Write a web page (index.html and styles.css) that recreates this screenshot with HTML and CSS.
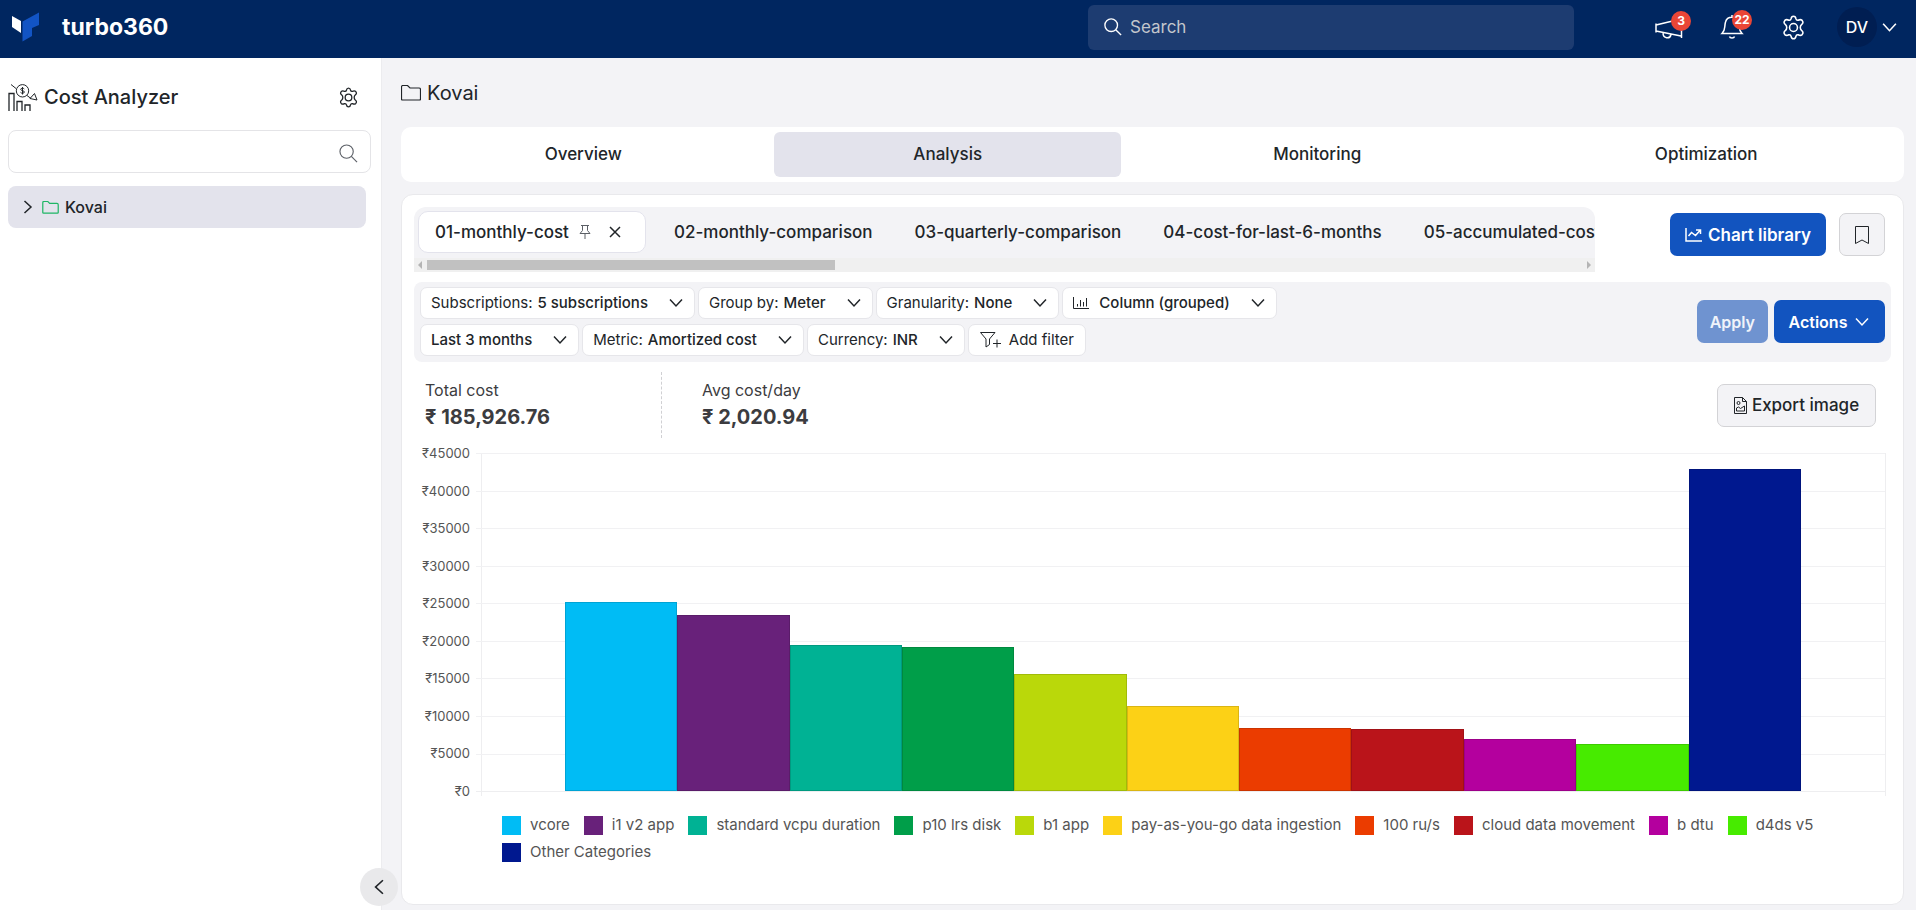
FILE: index.html
```html
<!DOCTYPE html>
<html lang="en">
<head>
<meta charset="utf-8">
<title>Cost Analyzer - turbo360</title>
<link rel="stylesheet" href="styles.css">
</head>
<body>
<svg class="defs" aria-hidden="true">
  <symbol id="chevron" viewBox="0 0 16 16"><path d="M2 4.500l6 6.500 6-6.500"/></symbol>
  <symbol id="magnifier" viewBox="0 0 20 20"><circle cx="8" cy="8" r="7"/><path d="M13 13l6 6"/></symbol>
  <symbol id="folder" viewBox="0 0 20 16"><path d="M.5 14V2q0-1.500 1.500-1.500h4.500l2.500 2.500h9q1.500 0 1.500 1.500V14q0 1-1 1h-17q-1 0-1-1z"/></symbol>
  <symbol id="gear" viewBox="0 0 24 24"><path d="M9.700 3.500Q10 1.200 12 1.200t2.300 2.300q.4 1.800 2.200 1.500 2.300-1.300 3.800.2 1.800 2.300-.6 4-1.200 1-1.200 2.800t1.200 2.800q2.400 1.700.6 4-1.500 1.500-3.800.2-1.800-.3-2.200 1.500-.3 2.300-2.300 2.300t-2.300-2.300Q9.300 18.700 7.500 19q-2.300 1.300-3.800-.2-1.800-2.300.6-4 1.200-1 1.200-2.800T4.300 9.200q-2.400-1.700-.6-4Q5.200 3.700 7.500 5q1.800.3 2.200-1.500z"/><circle cx="12" cy="12" r="3.800"/></symbol>
</svg>

<header class="topbar">
  <a class="brand" href="#">
    <svg class="brand-mark" viewBox="0 0 27 30"><path fill="#fff" d="M0 4l9 5v12l-9-6z"/><path fill="#1254c4" d="M10.500 9.500L27 .5V13l-7 3v8l-9.500 5.500z"/></svg>
    <span>turbo360</span>
  </a>
  <label class="global-search">
    <svg class="icon" width="18" height="18"><use href="#magnifier"/></svg>
    <input type="search" placeholder="Search" aria-label="Search">
  </label>
  <nav class="top-actions" aria-label="Account">
    <button class="top-button" aria-label="Announcements"><svg class="icon" width="28" height="24" viewBox="0 0 28 24"><path d="M1 8.500v9M1 10l25-6M1 16l25 5M26.500 2v21M8 18c0 5.500 7 6.500 8 1.500"/></svg><span class="badge">3</span></button>
    <button class="top-button" aria-label="Notifications"><svg class="icon" width="24" height="26" viewBox="0 0 24 26"><path d="M2 19.500c4-4 2-6 3.500-11.500C7 1.500 17 1.500 18.500 8c1.500 5.500-.5 7.500 3.500 11.500zM9.500 22.500c.5 2 4.500 2 5 0M12 1v2.500"/></svg><span class="badge">22</span></button>
    <button class="top-button" aria-label="Settings"><svg class="icon" width="25" height="25"><use href="#gear"/></svg></button>
    <button class="profile"><span class="avatar">DV</span><svg class="icon" width="17" height="17"><use href="#chevron"/></svg></button>
  </nav>
</header>

<div class="shell">
  <aside class="sidebar">
    <div class="side-head">
      <svg class="icon" width="30" height="27" viewBox="0 0 30 27"><path stroke-width="1.300" d="M1 27V9.500h5V27M9 27v-9.500h5V27M17 27v-6h5v6"/><circle stroke-width="1" cx="14.500" cy="6.800" r="6.200"/><path stroke-width="1" d="M3 .5l5 4M19 11.500l4 3M22 14.500l4.500-5 2.500 6.500zM16.300 5c-.8-1.200-3.600-1-3.600.4 0 1.500 3.700 1 3.700 2.600 0 1.500-3 1.700-3.900.3M14.500 3v7.500"/></svg>
      <h1>Cost Analyzer</h1>
      <button class="plain" aria-label="Cost Analyzer settings"><svg class="icon" width="21" height="21"><use href="#gear"/></svg></button>
    </div>
    <label class="side-search">
      <input type="search" aria-label="Filter groups">
      <svg class="icon" width="19" height="19"><use href="#magnifier"/></svg>
    </label>
    <a class="tree-row" href="#">
      <svg class="icon turn-right" width="16" height="16"><use href="#chevron"/></svg>
      <svg class="icon green" width="17" height="13"><use href="#folder"/></svg>
      <span>Kovai</span>
    </a>
    <button class="collapse" aria-label="Collapse sidebar"><svg class="icon turn-left" width="18" height="18"><use href="#chevron"/></svg></button>
  </aside>

  <main class="main">
    <div class="crumb"><svg class="icon" width="20" height="16"><use href="#folder"/></svg><span>Kovai</span></div>
    <nav class="tabs" aria-label="Sections">
      <a href="#">Overview</a><a class="active" href="#">Analysis</a><a href="#">Monitoring</a><a href="#">Optimization</a>
    </nav>

    <section class="card">
      <div class="views">
        <div class="strip">
          <div class="view-list">
            <div class="view active"><span>01-monthly-cost</span>
              <button class="plain pin" aria-label="Pin"><svg class="icon thin" width="12" height="16" viewBox="0 0 12 16"><path d="M2 1.500h8M3.500 1.500v5L1 9.500h10L8.500 6.500v-5M6 9.500V15"/></svg></button>
              <button class="plain" aria-label="Close"><svg class="icon" width="12" height="12" viewBox="0 0 12 12"><path d="M1 1l10 10M11 1L1 11"/></svg></button>
            </div>
            <a class="view" href="#">02-monthly-comparison</a>
            <a class="view" href="#">03-quarterly-comparison</a>
            <a class="view" href="#">04-cost-for-last-6-months</a>
            <a class="view" href="#">05-accumulated-cost</a>
          </div>
          <div class="scroller"><i class="arrow left"></i><div class="track"><div class="thumb"></div></div><i class="arrow right"></i></div>
        </div>
        <button class="btn primary library"><svg class="icon" width="18" height="14" viewBox="0 0 18 14"><path d="M1 0v13h16M3.500 8l3-3.500 4 3 4.500-5M11 2h4.500v4"/></svg>Chart library</button>
        <button class="btn outline bookmark" aria-label="Bookmark"><svg class="icon thin" width="16" height="20" viewBox="0 0 16 20"><path d="M1.500 1.500h13v17L8 15l-6.500 3.500z"/></svg></button>
      </div>

      <div class="filters">
        <div class="chip-rows">
          <div class="chips">
            <button class="chip">Subscriptions: <b>5 subscriptions</b><svg class="icon" width="16" height="16"><use href="#chevron"/></svg></button>
            <button class="chip">Group by: <b>Meter</b><svg class="icon" width="16" height="16"><use href="#chevron"/></svg></button>
            <button class="chip">Granularity: <b>None</b><svg class="icon" width="16" height="16"><use href="#chevron"/></svg></button>
            <button class="chip"><svg class="icon thin lead" width="16" height="12" viewBox="0 0 16 12"><path d="M.5 0v11.500H16M4.500 9.500V7M7.500 9.500V3M10.500 9.500V5M13.500 9.500V1"/></svg><b>Column (grouped)</b><svg class="icon" width="16" height="16"><use href="#chevron"/></svg></button>
          </div>
          <div class="chips">
            <button class="chip"><b>Last 3 months</b><svg class="icon" width="16" height="16"><use href="#chevron"/></svg></button>
            <button class="chip">Metric: <b>Amortized cost</b><svg class="icon" width="16" height="16"><use href="#chevron"/></svg></button>
            <button class="chip">Currency: <b>INR</b><svg class="icon" width="16" height="16"><use href="#chevron"/></svg></button>
            <button class="chip add"><svg class="icon thin" width="21" height="16" viewBox="0 0 21 16"><path d="M.5.500h14.500L9.500 7v5.500L6 15V7zM13 11.500h8M17 7.500v8"/></svg>Add filter</button>
          </div>
        </div>
        <button class="btn primary" disabled>Apply</button>
        <button class="btn primary actions">Actions<svg class="icon" width="16" height="16"><use href="#chevron"/></svg></button>
      </div>

      <div class="summary">
        <div class="figure"><span>Total cost</span><strong>₹ 185,926.76</strong></div>
        <div class="figure"><span>Avg cost/day</span><strong>₹ 2,020.94</strong></div>
        <button class="btn outline export"><svg class="icon thin" width="13" height="17" viewBox="0 0 13 17"><path d="M.5.500h8l4 4v12H.5zM8.500.5v4h4M2.500 14v-3l2-1 2 1.500 4-2.500v5z"/><circle cx="4.500" cy="6" r="1.500"/></svg>Export image</button>
      </div>

      <div class="chart">
        <div class="axis"><span>₹45000</span><span>₹40000</span><span>₹35000</span><span>₹30000</span><span>₹25000</span><span>₹20000</span><span>₹15000</span><span>₹10000</span><span>₹5000</span><span>₹0</span></div>
        <div class="plot">
          <div class="lines"><i></i><i></i><i></i><i></i><i></i><i></i><i></i><i></i><i></i></div>
          <div class="bars">
            <div class="bar c1" style="height:55.800%"></div>
            <div class="bar c2" style="height:52.100%"></div>
            <div class="bar c3" style="height:43.100%"></div>
            <div class="bar c4" style="height:42.700%"></div>
            <div class="bar c5" style="height:34.500%"></div>
            <div class="bar c6" style="height:25.300%"></div>
            <div class="bar c7" style="height:18.600%"></div>
            <div class="bar c8" style="height:18.200%"></div>
            <div class="bar c9" style="height:15.300%"></div>
            <div class="bar c10" style="height:13.800%"></div>
            <div class="bar c11" style="height:95.300%"></div>
          </div>
        </div>
      </div>
      <ul class="legend">
        <li><i class="c1"></i>vcore</li><li><i class="c2"></i>i1 v2 app</li><li><i class="c3"></i>standard vcpu duration</li><li><i class="c4"></i>p10 lrs disk</li><li><i class="c5"></i>b1 app</li><li><i class="c6"></i>pay-as-you-go data ingestion</li><li><i class="c7"></i>100 ru/s</li><li><i class="c8"></i>cloud data movement</li><li><i class="c9"></i>b dtu</li><li><i class="c10"></i>d4ds v5</li><li><i class="c11"></i>Other Categories</li>
      </ul>
    </section>
  </main>
</div>
</body>
</html>
```
FILE: styles.css
```css
* { box-sizing: border-box; }
body {
  margin: 0;
  min-height: 100vh;
  display: flex;
  flex-direction: column;
  background: #f3f3f6;
  color: #212529;
  font: 500 16px/24px Inter, "Open Sans", "Noto Sans", sans-serif;
}
button, input { font: inherit; color: inherit; }
button { border: 0; padding: 0; background: none; cursor: pointer; }
a { color: inherit; text-decoration: none; }
.defs { position: absolute; width: 0; height: 0; }
.icon { flex: none; fill: none; stroke: currentColor; stroke-width: 1.5; }
.thin { stroke-width: 1; }
.turn-right { transform: rotate(-90deg); }
.turn-left { transform: rotate(90deg); }
.green { color: #1fb665; }
.plain { display: flex; }

/* Top bar */
.topbar {
  height: 58px;
  padding: 0 18px 0 12px;
  display: flex;
  align-items: center;
  background: #002660;
  color: #fff;
}
.brand { flex: 1; display: flex; align-items: center; gap: 23px; padding-bottom: 4px; font-size: 23px; font-weight: 700; }
.brand-mark { width: 27px; height: 30px; }
.global-search {
  width: 486px;
  height: 45px;
  margin-bottom: 4px;
  padding: 0 16px;
  display: flex;
  align-items: center;
  gap: 6px;
  border-radius: 6px;
  background: #1d3c71;
}
.global-search input { flex: 1; min-width: 0; border: 0; background: none; outline: 0; font-size: 17px; font-weight: 400; }
.global-search input::placeholder { color: #c3c6cc; }
.top-actions { width: 324px; display: flex; align-items: center; justify-content: flex-end; gap: 37px; padding-bottom: 4px; }
.top-button { position: relative; display: flex; }
.badge {
  position: absolute;
  top: -4px;
  right: -8px;
  min-width: 20px;
  height: 20px;
  border-radius: 10px;
  background: #ea4636;
  font-size: 12px;
  font-weight: 700;
  line-height: 20px;
  text-align: center;
}
.profile { display: flex; align-items: center; gap: 4px; margin-left: -6px; }
.avatar { width: 40px; height: 40px; border-radius: 50%; background: #001e52; line-height: 40px; }

.shell { flex: 1; display: flex; }

/* Sidebar */
.sidebar {
  position: relative;
  width: 382px;
  flex: none;
  padding: 23px 10px 0 8px;
  border-right: 1px solid #ececef;
  background: #fff;
}
.side-head { display: flex; align-items: center; gap: 6px; height: 32px; }
.side-head h1 { flex: 1; margin: 0; font-size: 20px; font-weight: 500; }
.side-head .plain { margin-right: 12px; }
.side-search {
  height: 43px;
  margin-top: 17px;
  padding: 4px 12px 0;
  display: flex;
  align-items: center;
  border: 1px solid #e4e4e7;
  border-radius: 8px;
  color: #5c6067;
}
.side-search .icon { stroke-width: 1.2; }
.side-search input { flex: 1; min-width: 0; border: 0; outline: 0; }
.tree-row {
  height: 42px;
  margin: 13px 5px 0 0;
  padding: 0 12px;
  display: flex;
  align-items: center;
  gap: 6px;
  border-radius: 8px;
  background: #e3e3ec;
}
.collapse {
  position: absolute;
  right: -17px;
  bottom: 4px;
  width: 38px;
  height: 38px;
  display: grid;
  place-items: center;
  border-radius: 50%;
  background: #e9e9eb;
}

/* Main column */
.main { flex: 1; min-width: 0; padding: 23px 12px 5px 19px; display: flex; flex-direction: column; }
.crumb { display: flex; align-items: center; gap: 6px; font-size: 20px; font-weight: 400; }
.crumb .icon { stroke-width: 1.2; }
.tabs {
  display: grid;
  grid-template-columns: 354fr 346fr 364fr 385fr;
  gap: 14px;
  margin: 22px 0 12px;
  padding: 5px;
  border-radius: 10px;
  background: #fff;
  font-size: 17px;
  text-align: center;
}
.tabs a { border-radius: 6px; line-height: 45px; }
.tabs .active { background: #e3e3ec; }
.card { flex: 1; min-width: 0; padding: 12px; border: 1px solid #e9e9ec; border-radius: 12px; background: #fff; }

/* Saved views */
.views { display: flex; align-items: flex-start; }
.strip { flex: 1; min-width: 0; border-radius: 12px 12px 0 0; background: #f3f3f6; overflow: hidden; }
.view-list { display: flex; height: 51px; padding: 4px 4px 5px; overflow: hidden; font-size: 17px; }
.view { flex: none; padding: 0 14px 0 28px; line-height: 42px; }
.view.active { display: flex; align-items: center; gap: 10px; width: 228px; padding: 0 16px; border: 1px solid #e3e3ec; border-radius: 10px; background: #fff; }
.pin { margin-right: 8px; color: #5c6067; }
.scroller { display: flex; align-items: center; height: 14px; padding: 0 4px; background: #f0f0f0; }
.track { flex: 1; margin: 0 5px; }
.thumb { width: 35.300%; height: 10px; background: #c1c1c1; }
.arrow { border: 4px solid transparent; }
.arrow.left { border-left: 0; border-right-color: #b4b4b4; }
.arrow.right { border-right: 0; border-left-color: #b4b4b4; }
.btn {
  flex: none;
  height: 43px;
  padding: 0 13px;
  display: flex;
  align-items: center;
  justify-content: center;
  gap: 5px;
  border-radius: 7px;
  font-size: 16px;
}
.primary { background: #1254bf; color: #fff; font-weight: 600; }
.primary:disabled { background: #6f93d0; color: #f0f3fa; }
.outline { border: 1px solid #d3d3d6; background: #f3f3f6; }
.library { margin: 6px 0 0 75px; width: 156px; font-size: 17px; }
.bookmark { width: 46px; margin: 6px 6px 0 13px; }

/* Filters */
.filters {
  display: flex;
  align-items: center;
  gap: 6px;
  margin-top: 10px;
  padding: 5px 6px 6px;
  border-radius: 8px;
  background: #f3f3f6;
}
.actions { width: 111px; gap: 7px; }
.chip-rows { flex: 1; display: grid; gap: 5px; }
.chips { display: flex; gap: 3px; }
.chip {
  height: 32px;
  padding: 0 10px;
  display: flex;
  align-items: center;
  gap: 5px;
  border: 1px solid #e6e6ea;
  border-radius: 7px;
  background: #fff;
  font-size: 15px;
  font-weight: 400;
}
.chip b { margin-right: 15px; font-weight: 500; }
.chip .lead { margin-right: 5px; }
.chip.add { gap: 8px; padding: 0 11px; }

/* Summary */
.summary { display: flex; align-items: center; height: 66px; margin-top: 10px; padding: 0 15px 0 11px; }
.figure { height: 66px; padding: 6px 0; display: flex; flex-direction: column; gap: 3px; width: 236px; color: #3c3c40; font-weight: 400; }
.figure + .figure { padding-left: 40px; border-left: 1px dashed #d0d0d3; }
.figure strong { font-size: 20px; font-weight: 700; }
.export { margin-left: auto; width: 159px; font-size: 17px; }

/* Chart */
.chart { display: flex; padding: 15px 5px 0 0; }
.axis {
  width: 56px;
  height: 360px;
  margin: -11px 11px 0 0;
  display: flex;
  flex-direction: column;
  justify-content: space-between;
  text-align: right;
  font-size: 13px;
  font-weight: 400;
  line-height: 22px;
  color: #555;
}
.plot { flex: 1; position: relative; height: 343px; border: 1px solid #eeeef0; border-top: 0; border-bottom: 0; }
.lines { height: 339px; margin-left: -6px; display: flex; flex-direction: column; border-bottom: 1px solid #eeeef0; }
.lines i { flex: 1; border-top: 1px solid #f1f1f3; }
.bars { position: absolute; inset: 0 6% 5px 5.900%; display: flex; align-items: flex-end; }
.bar { flex: 1; box-shadow: inset 0 0 0 1px #0002; }
.c1 { background: #00bcf5; }
.c2 { background: #68217a; }
.c3 { background: #00b294; }
.c4 { background: #009e49; }
.c5 { background: #bad80a; }
.c6 { background: #fcd116; }
.c7 { background: #eb3c00; }
.c8 { background: #ba141a; }
.c9 { background: #b4009e; }
.c10 { background: #47eb00; }
.c11 { background: #00188f; }
.legend {
  display: flex;
  flex-wrap: wrap;
  gap: 5px 14px;
  margin: 12px 60px 0 88px;
  padding: 0;
  list-style: none;
  font-size: 15px;
  font-weight: 400;
  line-height: 22px;
  color: #555;
}
.legend li { display: flex; align-items: center; gap: 9px; }
.legend i { width: 19px; height: 19px; }
```
